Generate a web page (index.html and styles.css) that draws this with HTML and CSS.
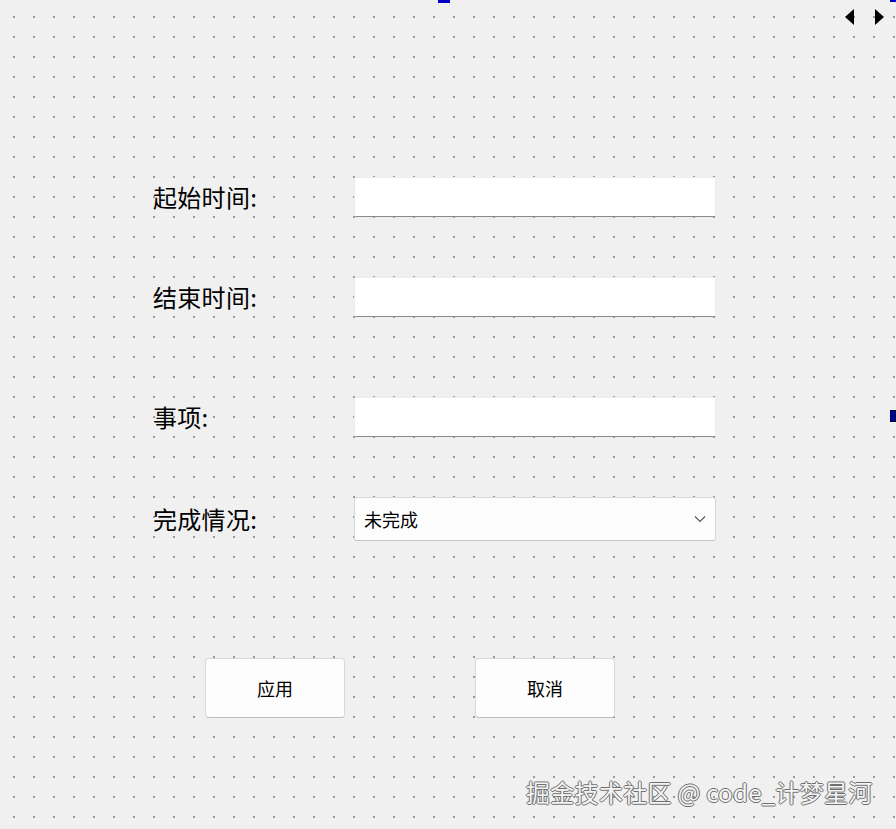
FILE: index.html
```html
<!DOCTYPE html>
<html lang="zh-CN">
<head>
    <meta charset="UTF-8">
    <meta name="viewport" content="width=device-width, initial-scale=1.0">
    <title>编辑事项</title>
    <link rel="stylesheet" href="styles.css">
</head>
<body>
    <div class="canvas">
        <!-- designer handles -->
        <span class="handle handle-top"></span>
        <span class="handle handle-corner"></span>
        <span class="handle handle-right"></span>
        <span class="arrow arrow-left"></span>
        <span class="arrow arrow-right"></span>

        <form class="form">
            <div class="row row-first">
                <label for="start">起始时间:</label>
                <input type="text" id="start" class="line-edit">
            </div>
            <div class="row row-second">
                <label for="end">结束时间:</label>
                <input type="text" id="end" class="line-edit">
            </div>
            <div class="row row-third">
                <label for="item">事项:</label>
                <input type="text" id="item" class="line-edit">
            </div>
            <div class="row row-fourth">
                <label for="state">完成情况:</label>
                <div class="combo" id="state">
                    <span>未完成</span>
                    <svg class="chevron" width="12" height="8" viewBox="0 0 12 8">
                        <path d="M1 1.5 L6 6.5 L11 1.5" fill="none" stroke="#555" stroke-width="1.1"/>
                    </svg>
                </div>
            </div>

            <div class="buttons">
                <button type="button" class="btn">应用</button>
                <button type="button" class="btn">取消</button>
            </div>
        </form>

        <div class="watermark">掘金技术社区 @ code_计梦星河</div>
    </div>
</body>
</html>
```

FILE: styles.css
```css
* {
    margin: 0;
    padding: 0;
    box-sizing: border-box;
}

body {
    font-family: "Noto Sans CJK SC", "Noto Sans", sans-serif;
    background-color: #f0f0f0;
    width: 896px;
    height: 829px;
    overflow: hidden;
}

.canvas {
    position: relative;
    width: 896px;
    height: 829px;
    background-color: #f0f0f0;
    background-image: conic-gradient(at 2px 2px, transparent 75%, #9a9a9a 0);
    background-size: 20px 20px;
    background-position: 13px 16px;
}

.form {
    padding-top: 177px;
    padding-left: 153px;
}

.row {
    display: flex;
    align-items: center;
    height: 40px;
}

.row-second {
    margin-top: 60px;
}

.row-third {
    margin-top: 80px;
}

.row-fourth {
    margin-top: 60px;
    height: 44px;
}

label {
    width: 201px;
    font-size: 24px;
    color: #000;
    line-height: 1;
    letter-spacing: 0.3px;
}

.line-edit {
    width: 362px;
    height: 40px;
    background: #fff;
    border: 1px solid #ececec;
    border-bottom: 1px solid #8a8a8a;
    border-radius: 2px;
    outline: none;
    font-size: 16px;
}

.combo {
    width: 362px;
    height: 44px;
    display: flex;
    align-items: center;
    justify-content: space-between;
    padding: 0 9px 1px 9px;
    background: #fdfdfd;
    border: 1px solid #d6d6d6;
    border-bottom-color: #c4c4c4;
    border-radius: 3px;
    font-size: 18px;
    color: #000;
}

.buttons {
    display: flex;
    gap: 130px;
    margin-top: 117px;
    padding-left: 52px;
}

.btn {
    width: 140px;
    height: 60px;
    background: #fdfdfd;
    border: 1px solid #d9d9d9;
    border-bottom-color: #bdbdbd;
    border-radius: 4px;
    font-family: "Noto Sans CJK SC", sans-serif;
    font-size: 18px;
    color: #000;
}

.watermark {
    position: absolute;
    left: 526px;
    top: 776px;
    font-size: 24px;
    line-height: 32px;
    letter-spacing: 0.3px;
    color: #f4f4f4;
    white-space: nowrap;
    text-shadow:
        1px 0 0 #6f6f6f,
        -1px 0 0 #6f6f6f,
        0 1px 0 #6f6f6f,
        0 -1px 0 #6f6f6f;
}

.handle {
    position: absolute;
    background: #0000c8;
}

.handle-top {
    left: 438px;
    top: 0;
    width: 12px;
    height: 3px;
}

.handle-corner {
    right: 0;
    top: 0;
    width: 6px;
    height: 2px;
}

.handle-right {
    right: 0;
    top: 410px;
    width: 6px;
    height: 12px;
    border: 1px solid #000040;
    background: #00009a;
}

.arrow {
    position: absolute;
    top: 9px;
    width: 0;
    height: 0;
    border-top: 8px solid transparent;
    border-bottom: 8px solid transparent;
}

.arrow-left {
    left: 845px;
    border-right: 9px solid #000;
}

.arrow-right {
    left: 875px;
    border-left: 9px solid #000;
}
```
